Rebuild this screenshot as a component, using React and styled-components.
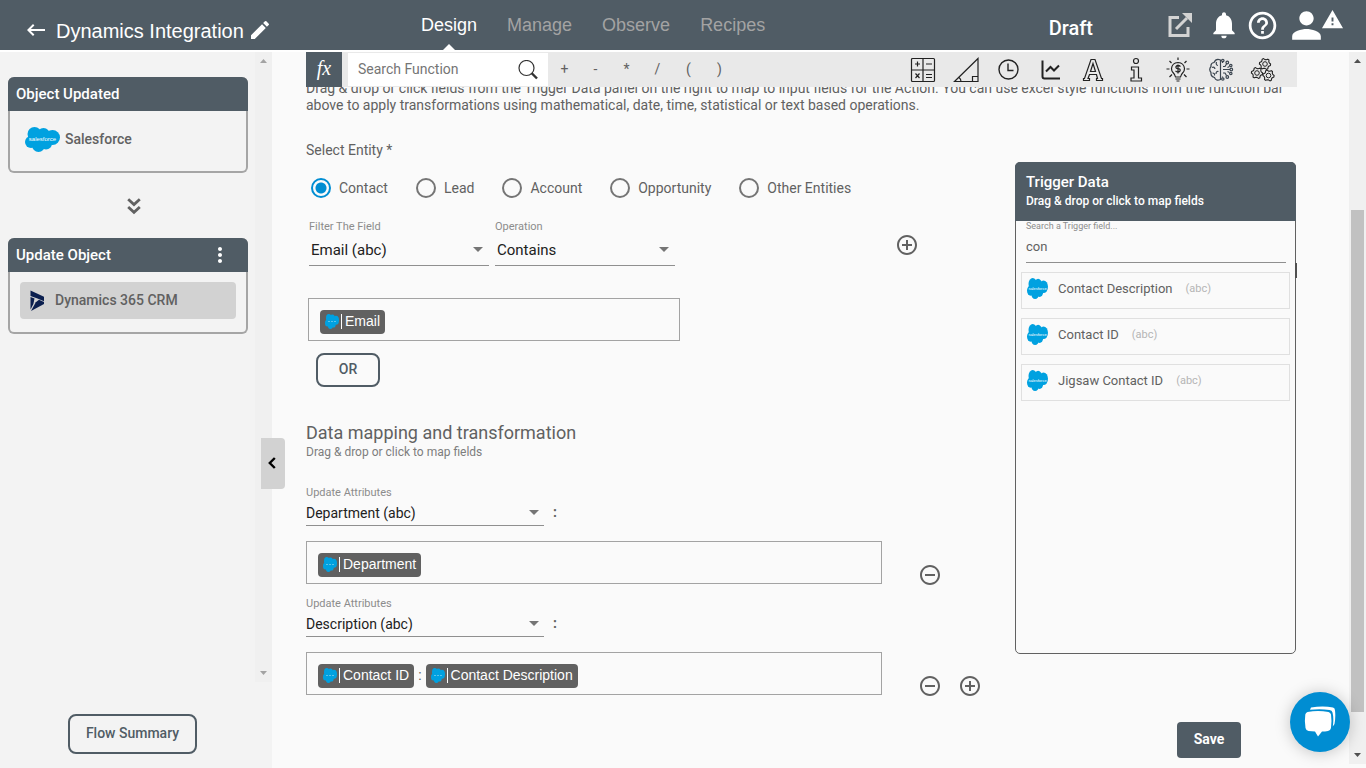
import React, { useState } from "react";
import styled, { createGlobalStyle, css } from "styled-components";
import {
	MdKeyboardBackspace,
	MdEdit,
	MdNotifications,
	MdHelpOutline,
	MdPerson,
	MdWarning,
	MdMoreVert,
	MdAddCircleOutline,
	MdRemoveCircleOutline,
} from "react-icons/md";

const TABS = ["Design", "Manage", "Observe", "Recipes"];
const OPERATORS = ["+", "-", "*", "/", "(", ")"];
const ENTITIES = ["Contact", "Lead", "Account", "Opportunity", "Other Entities"];
const TRIGGER_FIELDS = ["Contact Description", "Contact ID", "Jigsaw Contact ID"];
const MAPPINGS = [
	{ id: 1, attribute: "Department (abc)", chips: ["Department"] },
	{
		id: 2,
		attribute: "Description (abc)",
		chips: ["Contact ID", "Contact Description"],
	},
];

/* ---------- drawings ---------- */

const SalesforceLogo = ({ width, height, fontSize }) => (
	<svg width={width} height={height} aria-hidden="true">
		<svg
			width={width}
			height={height}
			viewBox="0 0 35 25"
			preserveAspectRatio="none"
			fill="#00a1e0"
		>
			<circle cx="9.5" cy="7" r="7" />
			<circle cx="18.5" cy="7.5" r="6.5" />
			<circle cx="27.5" cy="10.5" r="7.5" />
			<circle cx="6" cy="15" r="6" />
			<circle cx="13.5" cy="18.5" r="6.5" />
			<circle cx="21" cy="16.5" r="6" />
			<rect x="8" y="7" width="18" height="10" />
		</svg>
		{fontSize ? (
			<text
				x={width / 2}
				y={height / 2 + 1}
				textAnchor="middle"
				fill="#fff"
				fontFamily="Liberation Sans, sans-serif"
				fontSize={fontSize}
			>
				salesforce
			</text>
		) : (
			<path
				d={`M3 ${height / 2}h${width - 6}`}
				stroke="#5cc3ea"
				strokeDasharray="2 1"
			/>
		)}
	</svg>
);

const DynamicsLogo = () => (
	<svg width="14" height="21" viewBox="0 0 14 21" fill="#0b1f4f" aria-hidden="true">
		<path d="M0.5 0.5L14 6.8V11.2L7.5 8.6L0.5 6z" />
		<path d="M0.5 7L4.5 8.6L3.4 14L0.5 19.5z" />
		<path d="M14 12V14L1 21L5.8 12.2L9 9.8z" />
	</svg>
);

const ExternalIcon = () => (
	<svg width="24" height="24" viewBox="0 0 24 24" fill="none" stroke="#d3d3d3" strokeWidth="3">
		<path d="M11 4.500H2V22.500H20V14" />
		<path d="M8 16L19 5" />
		<path d="M14 0H24V10z" fill="#d3d3d3" stroke="none" />
	</svg>
);

const SearchIcon = () => (
	<svg width="20" height="20" viewBox="0 0 20 20" fill="none" stroke="#333">
		<circle cx="8.5" cy="8" r="7.5" strokeWidth="1.2" />
		<path d="M13.5 13L19 18.5" strokeWidth="2.4" />
	</svg>
);

const DoubleDownIcon = () => (
	<svg width="14" height="18" viewBox="0 0 14 18" fill="none" stroke="#616161" strokeWidth="2.800">
		<path d="M1.200 2.200L7 7.500L12.800 2.200M1.200 10L7 15.300L12.800 10" />
	</svg>
);

const CollapseIcon = () => (
	<svg width="8" height="12" viewBox="0 0 8 12" fill="none" stroke="#000" strokeWidth="2.400">
		<path d="M6.800 1L1.800 6L6.800 11" />
	</svg>
);

const ChatIcon = () => (
	<svg width="32" height="32" viewBox="0 0 32 32" fill="#fff">
		<path d="M7 1.5Q19 -0.5 29 1.5Q31 2 31 4.5Q31.800 11 30.500 18L28.800 20.500Q30 12 28.500 6.500Q28 4.200 25.500 4Q16 2.500 6 3.800z" />
		<path d="M3.500 6Q14 4 24.500 6Q26.500 6.500 27 8.500Q28 15.500 27 22Q26.500 24.500 24 25Q21 25.500 18 25.500L14 30.500L11 25.500L4.500 25Q2 24.500 1.500 22Q0.300 15.500 1.300 8.500Q1.700 6.500 3.500 6z" />
	</svg>
);

/* outline of a six-toothed gear */
const gear = (cx, cy) =>
	Array.from({ length: 24 }, (_, i) => {
		const a = (Math.PI / 12) * i;
		const r = i % 4 < 2 ? 5.6 : 4.4;
		return `${cx + r * Math.cos(a)},${cy + r * Math.sin(a)}`;
	}).join(" ");

const FUNCTION_GROUPS = [
	{
		name: "Mathematical",
		art: (
			<>
				<rect x="1.500" y="1.500" width="23" height="23" rx="1" />
				<path d="M13 1.500V24.500M1.500 13H24.500" />
				<path d="M7.500 4.500V9.500M5 7H10M16 7H22M5.500 16.500L9.500 21M9.500 16.500L5.500 21M16 17.500H22M16 20.500H22" />
			</>
		),
	},
	{
		name: "Trigonometry",
		art: (
			<>
				<path d="M1.500 24.500L25 1.500V24.500z" />
				<path d="M19.500 24.500V19.500H25M6 20.500Q8 22 8 24.500" />
			</>
		),
	},
	{
		name: "Date and time",
		art: (
			<>
				<circle cx="13.500" cy="12.500" r="9.500" strokeWidth="1.400" />
				<path d="M13 6.500V13.500H18.500" strokeWidth="1.400" />
			</>
		),
	},
	{
		name: "Statistical",
		art: (
			<>
				<path d="M4.500 3.500V19.500Q4.500 21.500 6.500 21.500H22" strokeWidth="2" />
				<path d="M8 14.500L12.500 10L16 13.500L21 8.500" strokeWidth="2" />
			</>
		),
	},
	{
		name: "Text",
		art: (
			<path d="M11 2.500H15L21.500 21.500H22.500V23.500H16.500V21.500H17.500L16.500 17.500H9.500L8 21.500H9.500V23.500H3.500V21.500H4.500zM13 6.500L10.500 14.500H15.500z" />
		),
	},
	{
		name: "Information",
		art: (
			<>
				<circle cx="13" cy="4" r="2.500" />
				<path d="M8.500 10H15.500V21H18.500V24H8V21H11V13H8.500z" />
			</>
		),
	},
	{
		name: "Financial",
		art: (
			<>
				<path d="M10.500 20Q10 17.500 8 15.500Q6.500 14 6.500 11.500Q7 6 13 5.500Q19 6 19.500 11.500Q19.500 14 18 15.500Q16 17.500 15.500 20z" />
				<path d="M10.500 22H15.500M11.500 24H14.500M13 0.500V3M1.500 12H4.500M21.500 12H24.500M4.500 4L6.500 6M21.500 4L19.500 6M4.500 20L7 17.500M21.500 20L19 17.500" />
				<path d="M15.500 9.500Q13 7.500 11 9.500Q10.500 11.500 13 11.700Q16 12 15 14Q13 16 10.500 14M13 7.500V16.500" />
			</>
		),
	},
	{
		name: "Intelligence",
		art: (
			<g stroke="#3c4650">
				<path d="M12.500 3V22.500Q8 24.500 6.500 20.500Q2.500 19.500 3 15.500Q0.500 12.500 3 9.500Q2.500 6 6 5.500Q8 1 12.500 3z" />
				<path d="M8.500 5Q7.500 8 10 8.500M4 10.500Q6.500 9.500 7 12M8 17Q8 14 10.500 14.500M4.500 16Q7 16 6.500 18.500" />
				<path d="M15 9.500H17L18.500 7M15 12.500H22M15 16H17L18.500 18.500M14.500 5V6M14.500 19.500V20.500M19.500 10.500L21.500 9.500M19.500 14.500L21.500 15.500" />
				<circle cx="14.800" cy="3.500" r="1.200" />
				<circle cx="19.300" cy="5.500" r="1.300" />
				<circle cx="22.800" cy="8.500" r="1.200" />
				<circle cx="23.300" cy="12.500" r="1.300" />
				<circle cx="22.800" cy="16.500" r="1.200" />
				<circle cx="19.300" cy="20" r="1.300" />
				<circle cx="14.800" cy="22" r="1.200" />
			</g>
		),
	},
	{
		name: "Settings",
		art: (
			<>
				{[
					[15, 7],
					[7, 16],
					[18.5, 18.5],
				].map(([x, y]) => (
					<g key={x}>
						<polygon points={gear(x, y)} strokeWidth="1.100" strokeLinejoin="round" />
						<circle cx={x} cy={y} r="2.300" strokeWidth="1" />
					</g>
				))}
			</>
		),
	},
];

/* ---------- parts ---------- */

const Chip = ({ label }) => (
	<ChipTag>
		<SalesforceLogo width={14} height={15} />
		<ChipText>{label}</ChipText>
	</ChipTag>
);

const SelectField = ({ id, label, value, size, inset }) => (
	<Field $width={inset ? 180 : 238}>
		<FieldLabel htmlFor={id}>{label}</FieldLabel>
		<SelectBox $inset={inset}>
			<Select id={id} defaultValue={value} $size={size} $inset={inset}>
				<option>{value}</option>
			</Select>
		</SelectBox>
	</Field>
);

const ScrollTrack = ({ strong, children }) => (
	<Track $strong={strong}>
		<svg width="7" height="4" aria-hidden="true">
			<path d="M0 4L3.500 0L7 4z" />
		</svg>
		{children}
		<svg width="7" height="4" aria-hidden="true">
			<path d="M0 0L3.500 4L7 0z" />
		</svg>
	</Track>
);

const Mapping = ({ item, last }) => (
	<div>
		<AttributeRow>
			<SelectField
				id={`attribute-${item.id}`}
				label="Update Attributes"
				value={item.attribute}
				size={14}
			/>
			<Colon>:</Colon>
		</AttributeRow>
		<ValueRow>
			<ExpressionBox>
				{item.chips.map((chip, i) => (
					<React.Fragment key={chip}>
						{i > 0 && <span>:</span>}
						<Chip label={chip} />
					</React.Fragment>
				))}
			</ExpressionBox>
			<Actions>
				<IconButton type="button" aria-label="Remove mapping">
					<MdRemoveCircleOutline size={24} />
				</IconButton>
				{last && (
					<IconButton type="button" aria-label="Add mapping">
						<MdAddCircleOutline size={24} />
					</IconButton>
				)}
			</Actions>
		</ValueRow>
	</div>
);

const App = () => {
	const [entity, setEntity] = useState("Contact");
	const [query, setQuery] = useState("con");

	return (
		<>
			<GlobalStyle />
			<Page>
				<Header>
					<TitleGroup>
						<IconButton type="button" aria-label="Back">
							<MdKeyboardBackspace size={24} />
						</IconButton>
						<Title>Dynamics Integration</Title>
						<IconButton type="button" aria-label="Rename">
							<MdEdit size={24} />
						</IconButton>
					</TitleGroup>
					<Nav>
						{TABS.map((tab) => (
							<NavLink key={tab} href="#" $active={tab === "Design"}>
								{tab}
							</NavLink>
						))}
					</Nav>
					<Status>Draft</Status>
					<HeaderIcons>
						<OpenLink href="#" aria-label="Open in new window">
							<ExternalIcon />
						</OpenLink>
						<IconButton type="button" aria-label="Notifications">
							<MdNotifications size={32} />
						</IconButton>
						<IconButton type="button" aria-label="Help">
							<MdHelpOutline size={33} />
						</IconButton>
						<UserButton type="button" aria-label="Account">
							<MdPerson size={43} />
							<WarningBadge>
								<MdWarning size={23} />
							</WarningBadge>
						</UserButton>
					</HeaderIcons>
				</Header>

				<Body>
					<Sidebar>
						<FlowArea>
							<FlowSteps>
								<StepCard>
									<StepHeader>Object Updated</StepHeader>
									<StepBody>
										<StepItem>
											<SalesforceLogo width={35} height={25} fontSize={6} />
											Salesforce
										</StepItem>
									</StepBody>
								</StepCard>
								<FlowArrow>
									<DoubleDownIcon />
								</FlowArrow>
								<StepCard>
									<StepHeader>
										Update Object
										<IconButton type="button" aria-label="Step menu">
											<MdMoreVert size={24} />
										</IconButton>
									</StepHeader>
									<StepBody>
										<StepItem $selected>
											<DynamicsLogo />
											Dynamics 365 CRM
										</StepItem>
									</StepBody>
								</StepCard>
							</FlowSteps>
							<ScrollTrack />
						</FlowArea>
						<SidebarFooter>
							<OutlineButton type="button" $width={129} $height={40}>
								Flow Summary
							</OutlineButton>
						</SidebarFooter>
						<CollapseTab type="button" aria-label="Collapse panel">
							<CollapseIcon />
						</CollapseTab>
					</Sidebar>

					<Main>
						<Workspace>
							<Toolbar>
								<FxBadge>fx</FxBadge>
								<SearchBox>
									<SearchInput
										type="text"
										placeholder="Search Function"
										aria-label="Search Function"
									/>
									<SearchIcon />
								</SearchBox>
								<Operators>
									{OPERATORS.map((op) => (
										<OperatorButton key={op} type="button">
											{op}
										</OperatorButton>
									))}
								</Operators>
								<FunctionGroups>
									{FUNCTION_GROUPS.map(({ name, art }) => (
										<IconButton key={name} type="button" aria-label={name}>
											<svg
												width="26"
												height="26"
												viewBox="0 0 26 26"
												fill="none"
												stroke="#222"
												strokeWidth="1.200"
											>
												{art}
											</svg>
										</IconButton>
									))}
								</FunctionGroups>
							</Toolbar>

							<ScrollArea>
								<Scrolled>
									<Intro>
										Drag &amp; drop or click fields from the Trigger Data panel
										on the right to map to input fields for the Action. You can
										use excel style functions from the function bar above to
										apply transformations using mathematical, date, time,
										statistical or text based operations.
									</Intro>
									<Columns>
										<Form>
											<p>Select Entity *</p>
											<Radios role="radiogroup" aria-label="Select Entity">
												{ENTITIES.map((name) => (
													<RadioLabel key={name}>
														<Radio
															type="radio"
															name="entity"
															checked={entity === name}
															onChange={() => setEntity(name)}
														/>
														{name}
													</RadioLabel>
												))}
											</Radios>
											<FilterRow>
												<FilterFields>
													<SelectField
														id="filter-field"
														label="Filter The Field"
														value="Email (abc)"
														size={15}
														inset
													/>
													<SelectField
														id="filter-operation"
														label="Operation"
														value="Contains"
														size={15}
														inset
													/>
												</FilterFields>
												<IconButton type="button" aria-label="Add filter">
													<MdAddCircleOutline size={24} />
												</IconButton>
											</FilterRow>
											<FilterValue>
												<ExpressionBox>
													<Chip label="Email" />
												</ExpressionBox>
												<OrRow>
													<OutlineButton type="button" $width={64} $height={34}>
														OR
													</OutlineButton>
												</OrRow>
											</FilterValue>
											<SectionTitle>Data mapping and transformation</SectionTitle>
											<SectionHint>Drag &amp; drop or click to map fields</SectionHint>
											<Mappings>
												{MAPPINGS.map((item, i) => (
													<Mapping
														key={item.id}
														item={item}
														last={i === MAPPINGS.length - 1}
													/>
												))}
											</Mappings>
										</Form>

										<TriggerPanel>
											<TriggerHeader>
												<TriggerTitle>Trigger Data</TriggerTitle>
												<TriggerHint>Drag &amp; drop or click to map fields</TriggerHint>
											</TriggerHeader>
											<TriggerSearch>
												<TriggerLabel htmlFor="trigger-search">
													Search a Trigger field...
												</TriggerLabel>
												<TriggerInput
													id="trigger-search"
													type="text"
													value={query}
													onChange={(e) => setQuery(e.target.value)}
												/>
											</TriggerSearch>
											<TriggerList>
												{TRIGGER_FIELDS.filter((name) =>
													name.toLowerCase().includes(query.toLowerCase())
												).map((name) => (
													<TriggerItem key={name}>
														<SalesforceLogo width={21} height={21} fontSize={4} />
														{name}
														<small>(abc)</small>
													</TriggerItem>
												))}
											</TriggerList>
											<PanelThumb />
										</TriggerPanel>
									</Columns>
									<FormFooter>
										<SaveButton type="button">Save</SaveButton>
									</FormFooter>
								</Scrolled>
							</ScrollArea>
						</Workspace>
						<ScrollTrack strong>
							<Thumb />
						</ScrollTrack>
					</Main>
				</Body>
				<ChatButton type="button" aria-label="Chat">
					<ChatIcon />
				</ChatButton>
			</Page>
		</>
	);
};

export default App;

const GlobalStyle = createGlobalStyle`
	* {
		box-sizing: border-box;
	}
	body {
		margin: 0;
		background: #fafafa;
		color: #616161;
		font-family: Roboto, "Liberation Sans", sans-serif;
		font-size: 14px;
		line-height: 17px;
	}
	button, input, select {
		font: inherit;
		color: inherit;
	}
	h1, h2, p, ul {
		margin: 0;
		padding: 0;
		font-weight: 400;
	}
`;

const Page = styled.div`
	display: flex;
	flex-direction: column;
	height: 100vh;
	overflow: hidden;
`;

const IconButton = styled.button`
	display: flex;
	flex: none;
	padding: 0;
	border: none;
	background: none;
	cursor: pointer;
`;

const Header = styled.header`
	display: flex;
	align-items: center;
	flex: none;
	height: 50px;
	padding-right: 38px;
	background: #505c65;
	color: #fff;
`;

const TitleGroup = styled.div`
	display: flex;
	align-items: center;
	flex: 0 0 421px;
	padding: 10px 0 0 24px;
`;

const Title = styled.h1`
	padding: 2px 4px 0 8px;
	font-family: "Liberation Sans", sans-serif;
	font-size: 20px;
	line-height: 24px;
	white-space: nowrap;
`;

const Nav = styled.nav`
	display: flex;
	align-self: stretch;
	column-gap: 30px;
`;

const NavLink = styled.a`
	position: relative;
	font-family: "Liberation Sans", sans-serif;
	font-size: 18px;
	line-height: 50px;
	color: ${({ $active }) => ($active ? "#fff" : "#a3a3a3")};
	text-decoration: none;
	${({ $active }) =>
		$active &&
		css`
			&::after {
				content: "";
				position: absolute;
				left: calc(50% - 6px);
				bottom: 0;
				border: 6px solid transparent;
				border-top: none;
				border-bottom-color: #fff;
			}
		`}
`;

const Status = styled.strong`
	margin-left: auto;
	padding: 6px 75px 0 0;
	font-size: 20px;
	font-weight: 500;
	line-height: 24px;
`;

const HeaderIcons = styled.div`
	display: flex;
	align-items: center;
	column-gap: 6px;
`;

const OpenLink = styled.a`
	display: flex;
	margin-right: 10px;
`;

const UserButton = styled(IconButton)`
	position: relative;
`;

const WarningBadge = styled.span`
	position: absolute;
	top: 4px;
	right: -16px;
	display: flex;
`;

const Body = styled.div`
	display: flex;
	flex: 1;
	min-height: 0;
	border-top: 2px solid #fff;
`;

const Sidebar = styled.aside`
	position: relative;
	display: flex;
	flex-direction: column;
	flex: 0 0 272px;
	background: #f3f3f3;
`;

const FlowArea = styled.div`
	display: flex;
	flex: 1;
`;

const FlowSteps = styled.div`
	flex: 1;
	padding: 25px 7px 0 8px;
`;

const StepCard = styled.section`
	border: 2px solid #a5a5a5;
	border-top: none;
	border-radius: 6px;
`;

const StepHeader = styled.h2`
	display: flex;
	align-items: center;
	justify-content: space-between;
	height: 34px;
	margin: 0 -2px;
	padding: 0 16px 0 8px;
	border-radius: 6px 6px 0 0;
	background: #505c65;
	color: #fff;
	font-size: 15px;
	font-weight: 500;
`;

const StepBody = styled.div`
	padding: 10px 10px 13px;
`;

const StepItem = styled.div`
	display: flex;
	align-items: center;
	height: 37px;
	column-gap: ${({ $selected }) => ($selected ? 11 : 5)}px;
	padding-left: ${({ $selected }) => ($selected ? 10 : 5)}px;
	border-radius: 4px;
	background: ${({ $selected }) => ($selected ? "#d2d2d2" : "none")};
	font-weight: 500;
`;

const FlowArrow = styled.div`
	display: flex;
	align-items: center;
	justify-content: center;
	height: 65px;
	padding-left: 12px;
`;

const SidebarFooter = styled.div`
	display: flex;
	justify-content: center;
	padding: 32px 7px 14px 0;
`;

const OutlineButton = styled.button`
	width: ${({ $width }) => $width}px;
	height: ${({ $height }) => $height}px;
	padding: 0 0 2px;
	border: 2px solid #505c65;
	border-radius: 8px;
	background: none;
	color: #505c65;
	font-weight: 500;
	cursor: pointer;
`;

const CollapseTab = styled.button`
	position: absolute;
	top: calc(50% + 28px);
	right: -13px;
	z-index: 1;
	display: flex;
	align-items: center;
	justify-content: center;
	width: 24px;
	height: 51px;
	padding: 0 2px 2px 0;
	border: none;
	border-radius: 0 4px 4px 0;
	background: #d2d2d2;
	cursor: pointer;
`;

const Track = styled.div`
	display: flex;
	flex-direction: column;
	align-items: center;
	justify-content: space-between;
	flex: 0 0 17px;
	padding: 7px 0;
	background: #f0f0f0;
	fill: ${({ $strong }) => ($strong ? "#505050" : "#a3a3a3")};
`;

const Thumb = styled.div`
	width: 13px;
	height: 502px;
	margin-top: 106px;
	background: #c1c1c1;
`;

const Main = styled.main`
	display: flex;
	flex: 1;
	min-width: 0;
	padding-bottom: 4px;
`;

const Workspace = styled.div`
	display: flex;
	flex-direction: column;
	flex: 1;
	min-width: 0;
	padding: 0 52px 0 34px;
`;

const Toolbar = styled.div`
	display: flex;
	align-items: stretch;
	flex: none;
	height: 35px;
	background: #e9e9e9;
`;

const FxBadge = styled.span`
	flex: 0 0 36px;
	background: #505c65;
	color: #fff;
	font: italic 20px/32px "Liberation Serif", serif;
	text-align: center;
`;

const SearchBox = styled.div`
	display: flex;
	align-items: center;
	flex: 0 0 200px;
	min-width: 0;
	width: 200px;
	margin: 1px 1px 1px 6px;
	padding: 0 10px;
	background: #fff;
`;

const SearchInput = styled.input`
	flex: 1;
	width: 0;
	min-width: 0;
	padding: 0;
	border: none;
	outline: none;
	background: none;
	&::placeholder {
		color: #757575;
		opacity: 1;
	}
`;

const Operators = styled.div`
	display: flex;
`;

const OperatorButton = styled.button`
	width: 31px;
	padding: 0;
	border: none;
	background: none;
	cursor: pointer;
`;

const FunctionGroups = styled.div`
	display: flex;
	align-items: center;
	justify-content: space-between;
	flex: 0 0 366px;
	margin: 0 21px 0 auto;
`;

const ScrollArea = styled.div`
	flex: 1;
	min-height: 0;
	overflow: hidden;
`;

/* resting scroll position: the first line sits half under the toolbar */
const Scrolled = styled.div`
	margin-top: -7px;
`;

const Intro = styled.p`
	padding-right: 10px;
`;

const Columns = styled.div`
	display: flex;
	align-items: flex-start;
	margin-top: 28px;
`;

const Form = styled.form`
	flex: 1;
	min-width: 0;
`;

const Radios = styled.div`
	display: flex;
	column-gap: 28px;
	margin: 19px 0 0 5px;
`;

const RadioLabel = styled.label`
	display: flex;
	align-items: center;
	column-gap: 8px;
	white-space: nowrap;
`;

const Radio = styled.input`
	appearance: none;
	width: 20px;
	height: 20px;
	margin: 0;
	border: 2px solid #757575;
	border-radius: 50%;
	&:checked {
		border-color: #008dd2;
		background: radial-gradient(circle, #008dd2 5px, transparent 6px);
	}
`;

const FilterRow = styled.div`
	display: flex;
	align-items: flex-end;
	justify-content: space-between;
	margin: 21px 96px 0 3px;
	> button {
		margin-bottom: 9px;
	}
`;

const FilterFields = styled.div`
	display: flex;
	column-gap: 6px;
`;

const Field = styled.div`
	width: ${({ $width }) => $width}px;
`;

const FieldLabel = styled.label`
	display: block;
	font-size: 11px;
	line-height: 16px;
	color: #8c8c8c;
`;

const SelectBox = styled.div`
	position: relative;
	&::after {
		content: "";
		position: absolute;
		right: ${({ $inset }) => ($inset ? 6 : 5)}px;
		top: ${({ $inset }) => ($inset ? 12 : 9)}px;
		border: 5px solid transparent;
		border-top-color: #757575;
		border-bottom: none;
		pointer-events: none;
	}
`;

const Select = styled.select`
	appearance: none;
	display: block;
	width: 100%;
	height: ${({ $inset }) => ($inset ? 31 : 25)}px;
	padding: 0 16px 0 ${({ $inset }) => ($inset ? 2 : 0)}px;
	border: none;
	border-bottom: 1px solid #8f8f8f;
	border-radius: 0;
	outline: none;
	background: none;
	color: #212121;
	font-size: ${({ $size }) => $size}px;
`;

const FilterValue = styled.div`
	width: 374px;
	padding: 32px 0 0 2px;
`;

const ExpressionBox = styled.div`
	display: flex;
	align-items: center;
	flex: 1;
	column-gap: 4px;
	height: 43px;
	padding: 4px 11px 0;
	border: 1px solid #a3a3a3;
`;

const ChipTag = styled.span`
	display: flex;
	align-items: center;
	height: 24px;
	padding: 0 5px;
	border-radius: 4px;
	background: #616161;
	color: #fff;
	font-family: "Liberation Sans", sans-serif;
`;

const ChipText = styled.span`
	margin-left: 2px;
	padding-left: 3px;
	border-left: 1px solid #fff;
	line-height: 15px;
`;

const OrRow = styled.div`
	padding: 12px 8px 0;
`;

const SectionTitle = styled.h2`
	margin-top: 35px;
	font-size: 18px;
	line-height: 22px;
`;

const SectionHint = styled.p`
	font-size: 12px;
	line-height: 16px;
	color: #7d7d7d;
`;

const Mappings = styled.div`
	display: flex;
	flex-direction: column;
	row-gap: 12px;
	margin-top: 25px;
`;

const AttributeRow = styled.div`
	display: flex;
	align-items: flex-end;
`;

const Colon = styled.span`
	padding: 0 0 5px 9px;
	font-weight: 700;
`;

const ValueRow = styled.div`
	display: flex;
	align-items: flex-start;
	margin-top: 15px;
`;

const Actions = styled.div`
	display: flex;
	column-gap: 16px;
	flex: 0 0 133px;
	height: 43px;
	padding: 22px 0 0 36px;
`;

const TriggerPanel = styled.aside`
	position: relative;
	flex: 0 0 281px;
	min-height: 492px;
	margin: 20px 1px 0 0;
	border: 1px solid #616161;
	border-radius: 5px;
`;

const TriggerHeader = styled.div`
	height: 59px;
	margin: -1px -1px 0;
	padding: 11px 11px 0;
	border-radius: 5px 5px 0 0;
	background: #505c65;
	color: #fff;
	font-weight: 500;
`;

const TriggerTitle = styled.h2`
	font-size: 15px;
	font-weight: 500;
	line-height: 18px;
`;

const TriggerHint = styled.p`
	font-size: 12px;
	font-weight: 500;
	line-height: 20px;
`;

const TriggerSearch = styled.div`
	margin: 0 9px 0 10px;
`;

const TriggerLabel = styled.label`
	display: block;
	font-size: 9px;
	line-height: 10px;
	color: #8c8c8c;
`;

const TriggerInput = styled.input`
	display: block;
	width: 100%;
	height: 32px;
	padding: 0 0 1px;
	border: none;
	border-bottom: 1px solid #8f8f8f;
	outline: none;
	background: none;
	font-size: 13px;
`;

const TriggerList = styled.ul`
	display: flex;
	flex-direction: column;
	row-gap: 9px;
	margin: 9px 5px;
	list-style: none;
`;

const TriggerItem = styled.li`
	display: flex;
	align-items: center;
	height: 37px;
	padding: 0 5px 5px;
	border: 1px solid #e0e0e0;
	font-size: 13px;
	svg {
		margin-right: 10px;
	}
	small {
		margin-left: 13px;
		font-size: 11px;
		color: #b5b5b5;
	}
`;

const PanelThumb = styled.span`
	position: absolute;
	top: 100px;
	right: -2px;
	width: 2px;
	height: 15px;
	background: #505050;
`;

const FormFooter = styled.div`
	display: flex;
	justify-content: flex-end;
	padding: 27px 56px 0 0;
`;

const SaveButton = styled.button`
	width: 64px;
	height: 36px;
	padding: 0 0 2px;
	border: none;
	border-radius: 4px;
	background: #505c65;
	color: #fff;
	font-weight: 700;
	cursor: pointer;
`;

const ChatButton = styled.button`
	position: fixed;
	right: 16px;
	bottom: 16px;
	display: flex;
	align-items: center;
	justify-content: center;
	width: 60px;
	height: 60px;
	padding: 0;
	border: none;
	border-radius: 50%;
	background: #008dd2;
	box-shadow: 0 1px 16px rgba(0, 0, 0, 0.22);
	cursor: pointer;
`;
